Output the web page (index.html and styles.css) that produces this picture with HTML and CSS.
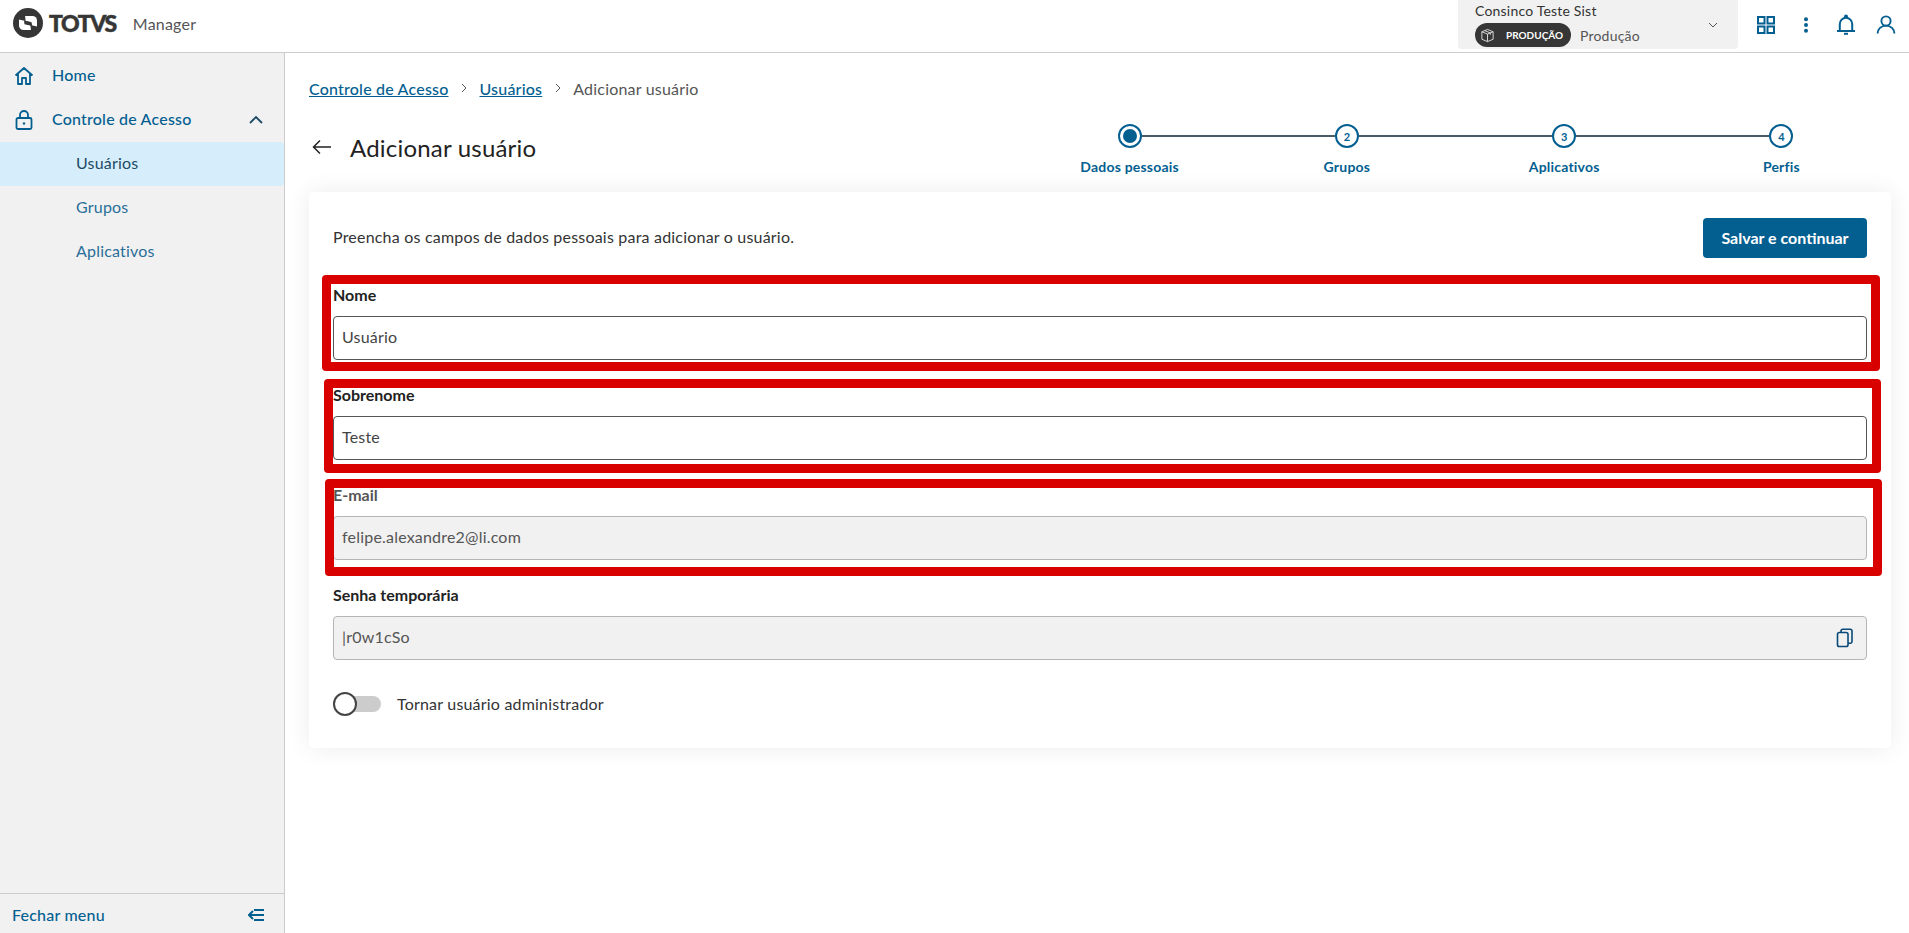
FILE: index.html
```html
<!DOCTYPE html>
<html lang="pt-BR">
<head>
<meta charset="utf-8">
<title>TOTVS Manager</title>
<link rel="stylesheet" href="styles.css">
</head>
<body>
<header class="topbar">
  <div class="brand">
    <svg class="logo-mark" viewBox="0 0 30 30" width="30" height="30" aria-hidden="true">
      <circle cx="15" cy="15" r="15" fill="#363636"/>
      <rect x="6" y="8" width="18" height="14" rx="4.5" fill="#fff"/>
      <path d="M6 11.5 L17 14 L18 22.5 L24 22 L24 18.5 L13 16 L12 7.5 L6 8Z" fill="#363636"/>
      <path d="M11 12.6 L18.6 14.3 L19.2 18 L11.5 16.2Z" fill="#363636"/>
    </svg>
    <span class="logo-word">TOTVS</span>
    <span class="product">Manager</span>
  </div>
  <div class="top-right">
    <div class="tenant">
      <div class="tenant-text">
        <div class="tenant-name">Consinco Teste Sist</div>
        <div class="tenant-env">
          <span class="badge">
            <svg viewBox="0 0 16 16" width="15" height="15" fill="none" stroke="#ddd" stroke-width="1" aria-hidden="true"><path d="M8 1.5 14 4v8l-6 2.5L2 12V4z M2 4l6 2.5L14 4 M8 6.5v8 M5 2.8l6 2.4v2"/></svg>
            PRODUÇÃO
          </span>
          <span class="env-name">Produção</span>
        </div>
      </div>
      <svg class="tenant-chevron" viewBox="0 0 10 6" width="10" height="6" fill="none" stroke="#555" stroke-width="1" aria-hidden="true"><path d="M1 1l4 4 4-4"/></svg>
    </div>
    <button class="icon-btn" aria-label="Aplicativos">
      <svg viewBox="0 0 20 20" width="20" height="20" fill="none" stroke="#045f91" stroke-width="2" aria-hidden="true"><rect x="2" y="2" width="6.5" height="6.5"/><rect x="11.5" y="2" width="6.5" height="6.5"/><rect x="2" y="11.5" width="6.5" height="6.5"/><rect x="11.5" y="11.5" width="6.5" height="6.5"/></svg>
    </button>
    <button class="icon-btn" aria-label="Mais">
      <svg viewBox="0 0 20 20" width="20" height="20" fill="#045f91" aria-hidden="true"><circle cx="10" cy="4.2" r="2"/><circle cx="10" cy="10" r="2"/><circle cx="10" cy="15.8" r="2"/></svg>
    </button>
    <button class="icon-btn" aria-label="Notificações">
      <svg viewBox="0 0 20 22" width="20" height="22" fill="none" stroke="#045f91" stroke-width="2" aria-hidden="true"><path d="M1 17h18M3.800 17V10a6.200 6.200 0 0 1 12.400 0v7M9 3.800V2.600a1 1 0 0 1 2 0v1.200"/><path d="M8 19.800h4"/></svg>
    </button>
    <button class="icon-btn" aria-label="Usuário">
      <svg viewBox="0 0 20 20" width="20" height="20" fill="none" stroke="#045f91" stroke-width="1.900" aria-hidden="true"><circle cx="10" cy="6" r="4.600"/><path d="M1.600 18.600c0-4.600 3.600-8 8.400-8s8.400 3.400 8.400 8"/></svg>
    </button>
  </div>
</header>

<div class="shell">
  <aside class="sidebar">
    <nav class="menu">
      <a class="menu-item">
        <svg class="menu-icon" viewBox="0 0 20 20" width="20" height="20" fill="none" stroke="#045f91" stroke-width="1.8" stroke-linejoin="round" aria-hidden="true"><path d="M1.5 9.5 10 2l8.500 7.500M4 8v10h4v-6h4v6h4V8"/></svg>
        <span>Home</span>
      </a>
      <a class="menu-item">
        <svg class="menu-icon" viewBox="0 0 20 20" width="20" height="20" fill="none" stroke="#045f91" stroke-width="1.8" aria-hidden="true"><rect x="2.500" y="8" width="15" height="11" rx="1.500"/><path d="M6 8V5a4 4 0 0 1 8 0v3"/><circle cx="10" cy="13.500" r="1.200" fill="#045f91" stroke="none"/></svg>
        <span class="menu-grow">Controle de Acesso</span>
        <svg viewBox="0 0 14 9" width="14" height="9" fill="none" stroke="#1d4a66" stroke-width="1.800" aria-hidden="true"><path d="M1 8l6-6 6 6"/></svg>
      </a>
      <a class="menu-sub active">Usuários</a>
      <a class="menu-sub">Grupos</a>
      <a class="menu-sub">Aplicativos</a>
    </nav>
    <div class="sidebar-foot">
      <span>Fechar menu</span>
      <svg viewBox="0 0 16 12" width="16" height="12" fill="none" stroke="#045f91" stroke-width="2" aria-hidden="true"><path d="M6 1h10M7 6h9M6 11h10M5 2 1 6l4 4M1 6h6"/></svg>
    </div>
  </aside>

  <main class="content">
    <nav class="crumbs">
      <a class="crumb-link">Controle de Acesso</a>
      <svg class="crumb-sep" viewBox="0 0 6 10" width="6" height="10" fill="none" stroke="#555" stroke-width="1" aria-hidden="true"><path d="M1 1l4 4-4 4"/></svg>
      <a class="crumb-link">Usuários</a>
      <svg class="crumb-sep" viewBox="0 0 6 10" width="6" height="10" fill="none" stroke="#555" stroke-width="1" aria-hidden="true"><path d="M1 1l4 4-4 4"/></svg>
      <span class="crumb-current">Adicionar usuário</span>
    </nav>

    <div class="page-head">
      <div class="title-wrap">
        <svg viewBox="0 0 20 16" width="20" height="16" fill="none" stroke="#222" stroke-width="1.500" aria-hidden="true"><path d="M19 8H1.500M8 1.500 1.500 8 8 14.500"/></svg>
        <h1>Adicionar usuário</h1>
      </div>
      <ol class="stepper">
        <li class="step first">
          <div class="track"><i class="seg"></i><b class="dot current"><em></em></b><i class="seg on"></i></div>
          <span class="step-label">Dados pessoais</span>
        </li>
        <li class="step">
          <div class="track"><i class="seg on"></i><b class="dot">2</b><i class="seg on"></i></div>
          <span class="step-label">Grupos</span>
        </li>
        <li class="step">
          <div class="track"><i class="seg on"></i><b class="dot">3</b><i class="seg on"></i></div>
          <span class="step-label">Aplicativos</span>
        </li>
        <li class="step">
          <div class="track"><i class="seg on"></i><b class="dot">4</b><i class="seg"></i></div>
          <span class="step-label">Perfis</span>
        </li>
      </ol>
    </div>

    <section class="card">
      <div class="card-head">
        <p>Preencha os campos de dados pessoais para adicionar o usuário.</p>
        <button class="primary">Salvar e continuar</button>
      </div>
      <div class="field">
        <label>Nome</label>
        <div class="input">Usuário</div>
      </div>
      <div class="field">
        <label>Sobrenome</label>
        <div class="input">Teste</div>
      </div>
      <div class="field">
        <label class="muted">E-mail</label>
        <div class="input disabled">felipe.alexandre2@li.com</div>
      </div>
      <div class="field">
        <label>Senha temporária</label>
        <div class="input disabled">
          <span>|r0w1cSo</span>
          <svg viewBox="0 0 18 20" width="18" height="20" fill="none" stroke="#0b4a78" stroke-width="1.600" aria-hidden="true"><rect x="1.500" y="4.500" width="10.500" height="14" rx="1.800"/><path d="M5 4.500V3a1.800 1.800 0 0 1 1.800-1.800h7.400A1.800 1.800 0 0 1 16 3v10.500a1.800 1.800 0 0 1-1.800 1.800H12"/></svg>
        </div>
      </div>
      <div class="toggle-row">
        <span class="toggle"><span class="knob"></span></span>
        <span class="toggle-text">Tornar usuário administrador</span>
      </div>
      <div class="mark mark-1"></div>
      <div class="mark mark-2"></div>
      <div class="mark mark-3"></div>
    </section>
  </main>
</div>
</body>
</html>
```

FILE: styles.css
```css
* { box-sizing: border-box; }
html, body { height: 100%; }
body {
  margin: 0;
  font-family: "Lato", "Noto Sans", sans-serif;
  font-size: 16px;
  letter-spacing: 0.2px;
  color: #333;
  background: #fff;
  display: flex;
  flex-direction: column;
  overflow: hidden;
}
.topbar {
  height: 53px;
  flex: none;
  display: flex;
  justify-content: space-between;
  align-items: flex-start;
  border-bottom: 1px solid #ccc;
  padding: 0 3px 0 13px;
}
.brand { display: flex; align-items: center; height: 46px; }
.logo-mark { display: block; }
.logo-word {
  font-weight: 900;
  font-size: 23px;
  letter-spacing: -1.4px;
  -webkit-text-stroke: 0.5px #363636;
  color: #363636;
  margin-left: 6px;
  line-height: 1;
}
.product { margin-left: 17px; color: #555; font-size: 16px; }
.top-right { display: flex; align-items: center; gap: 0; }
.tenant {
  width: 280px;
  height: 49px;
  background: #f1f1f1;
  border-radius: 0 0 4px 4px;
  padding: 0 20px 0 17px;
  display: flex;
  align-items: center;
  justify-content: space-between;
  margin-right: 8px;
}
.tenant-name { font-size: 14px; line-height: 18px; color: #333; }
.tenant-env { display: flex; align-items: center; gap: 9px; margin-top: 3px; }
.badge {
  display: inline-flex;
  align-items: center;
  gap: 11px;
  height: 24px;
  width: 96px;
  padding-left: 5px;
  border-radius: 12px;
  background: #363636;
  color: #fff;
  font-size: 10px;
  font-weight: 700;
  letter-spacing: 0;
}
.env-name { font-size: 14px; color: #555; }
.icon-btn {
  width: 40px;
  height: 49px;
  padding: 0;
  border: 0;
  background: none;
  display: flex;
  align-items: center;
  justify-content: center;
}
.shell { flex: 1; display: flex; min-height: 0; }
.sidebar {
  width: 285px;
  flex: none;
  background: #f1f1f1;
  border-right: 1px solid #ccc;
  display: flex;
  flex-direction: column;
  justify-content: space-between;
  padding-top: 1px;
}
.menu { display: flex; flex-direction: column; }
.menu-item {
  height: 44px;
  display: flex;
  align-items: center;
  padding: 0 21px 3px 14px;
  gap: 18px;
  color: #045f91;
  font-weight: 500;
}
.menu-item svg { position: relative; top: 1px; }
.menu-grow { flex: 1; }
.menu-sub {
  height: 44px;
  display: flex;
  align-items: center;
  padding: 0 0 3px 76px;
  color: #2a6f99;
}
.menu-sub.active {
  background: #d6eefb;
  color: #1d4a66;
  border-radius: 0 4px 4px 0;
}
.sidebar-foot {
  height: 40px;
  border-top: 1px solid #ccc;
  display: flex;
  align-items: center;
  justify-content: space-between;
  padding: 2px 20px 0 12px;
  color: #045f91;
  font-weight: 500;
}
.content {
  flex: 1;
  min-width: 0;
  padding: 22px 19px 0 24px;
}
.crumbs { display: flex; align-items: center; height: 26px; }
.crumb-link { color: #045f91; text-decoration: underline; font-weight: 500; }
.crumb-sep { margin: 0 12.5px; }
.crumb-current { color: #555; }
.page-head {
  display: flex;
  justify-content: space-between;
  align-items: flex-start;
  height: 84px;
  margin-top: 7px;
}
.title-wrap { display: flex; align-items: center; gap: 18px; height: 48px; margin-top: 15px; padding-left: 3px; }
h1 { margin: 0; font-size: 24px; font-weight: 400; color: #222; }
.stepper {
  list-style: none;
  margin: 16px 0 0;
  padding: 0;
  display: grid;
  grid-template-columns: repeat(4, 217.25px);
}
.step { display: flex; flex-direction: column; align-items: center; gap: 10px; }
.track { display: flex; align-items: center; width: 100%; }
.seg { flex: 1; height: 2px; }
.seg.on { background: #4a5c66; }
.dot {
  width: 24px;
  height: 24px;
  flex: none;
  border: 2px solid #045f91;
  border-radius: 50%;
  display: flex;
  align-items: center;
  justify-content: center;
  color: #045f91;
  font-size: 11px;
  font-weight: 700;
  font-style: normal;
  letter-spacing: 0;
}
.dot em { width: 14px; height: 14px; border-radius: 50%; background: #045f91; display: block; }
.step-label { font-size: 14px; font-weight: 700; color: #045f91; line-height: 18px; }
.card {
  position: relative;
  height: 556px;
  width: 1582px;
  background: #fff;
  border-radius: 4px;
  box-shadow: 0 0 24px rgba(0, 0, 0, 0.08);
  padding: 26px 24px 0;
}
.card-head {
  display: flex;
  justify-content: space-between;
  align-items: center;
  height: 40px;
  margin-bottom: 26px;
}
.card-head p { margin: 0 0 3px; color: #333; }
.primary {
  width: 164px;
  height: 40px;
  border: 0;
  border-radius: 4px;
  padding: 0 0 2px;
  background: #045f91;
  color: #fff;
  font: 700 16px "Lato", sans-serif;
}
.field { margin-bottom: 24px; }
.field label {
  display: block;
  height: 24px;
  line-height: 22px;
  margin-bottom: 8px;
  font-weight: 700;
  letter-spacing: 0;
  color: #222;
}
.field label.muted { color: #555; }
.input {
  height: 44px;
  border: 1px solid #555;
  border-radius: 4px;
  padding: 0 12px 3px 8px;
  display: flex;
  align-items: center;
  justify-content: space-between;
  color: #444;
}
.input svg { position: relative; top: 1px; }
.input.disabled { background: #f1f1f1; border-color: #b5b5b5; color: #555; }
.toggle-row { display: flex; align-items: center; gap: 16px; height: 24px; margin-top: 32px; color: #333; }
.toggle-text { padding-bottom: 2px; }
.toggle { width: 48px; height: 16px; background: #ccc; border-radius: 8px; display: flex; align-items: center; }
.knob { width: 24px; height: 24px; background: #fff; border: 2px solid #444; border-radius: 50%; display: block; }
.mark {
  position: absolute;
  border: 9px solid #d90000;
  border-radius: 4px;
  pointer-events: none;
}
.mark-1 { left: 13px; top: 83px; width: 1558px; height: 96px; }
.mark-2 { left: 15px; top: 187px; width: 1557px; height: 94px; }
.mark-3 { left: 16px; top: 287px; width: 1557px; height: 97px; }
```
